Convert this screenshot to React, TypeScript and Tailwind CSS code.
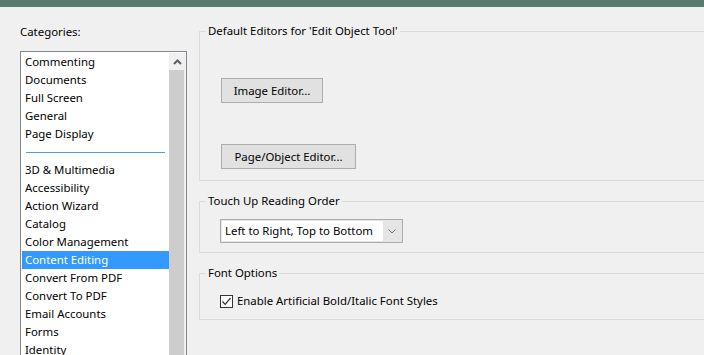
import React from "react";

const font = { fontFamily: '"Noto Sans", "Open Sans", Arial, sans-serif' };

const categoriesTop = ["Commenting", "Documents", "Full Screen", "General", "Page Display"];
const categoriesBottom = [
  "3D & Multimedia",
  "Accessibility",
  "Action Wizard",
  "Catalog",
  "Color Management",
  "Content Editing",
  "Convert From PDF",
  "Convert To PDF",
  "Email Accounts",
  "Forms",
  "Identity",
];

const Row: React.FC<{ label: string; selected?: boolean }> = ({ label, selected }) => (
  <div
    className={`h-[18px] pl-[3px] leading-[18px] whitespace-nowrap ${
      selected ? "bg-[#3399ff] text-white" : "text-black"
    }`}
  >
    {label}
  </div>
);

const GroupBox: React.FC<{ title: string; className?: string; children: React.ReactNode }> = ({
  title,
  className,
  children,
}) => (
  <fieldset className={`w-[540px] border border-[#dcdcdc] ${className ?? ""}`}>
    <legend className="ml-[6px] px-[2px] leading-[16px] text-black">{title}</legend>
    {children}
  </fieldset>
);

const WinButton: React.FC<{ label: string; width: string }> = ({ label, width }) => (
  <button
    className={`${width} h-[25px] border border-[#adadad] bg-[#e1e1e1] text-center text-black leading-[22px]`}
  >
    {label}
  </button>
);

export default function App() {
  return (
    <div
      className="w-[704px] h-[355px] overflow-hidden bg-[#f0f0f0] text-[11.4px] text-black"
      style={font}
    >
      <div className="h-[7px] bg-[#587b6f]" />
      <div className="flex">
        {/* Categories list */}
        <div className="w-[187px] shrink-0 pl-[20px]">
          <div className="mt-[17px] leading-[16px]">Categories:</div>
          <div className="mt-[11px] flex h-[320px] w-[167px] border border-[#828790] bg-white pt-[1px] pl-[1px]">
            <div className="w-[147px] shrink-0">
              {categoriesTop.map((c) => (
                <Row key={c} label={c} />
              ))}
              <div className="flex h-[18px] items-center pl-[4px] pr-[4px]">
                <div className="h-px w-full bg-[#5b9bd5]" />
              </div>
              {categoriesBottom.map((c) => (
                <Row key={c} label={c} selected={c === "Content Editing"} />
              ))}
            </div>
            {/* scrollbar */}
            <div className="flex w-[17px] flex-col bg-[#f0f0f0]">
              <div className="flex h-[17px] items-center justify-center">
                <svg width="9" height="6" viewBox="0 0 9 6">
                  <path d="M1 5 L4.5 1.5 L8 5" fill="none" stroke="#606060" strokeWidth="2" />
                </svg>
              </div>
              <div className="w-[15px] flex-1 bg-[#cdcdcd]" />
            </div>
          </div>
        </div>

        {/* Option groups */}
        <div className="ml-[12px] flex-1">
          <GroupBox title="Default Editors for 'Edit Object Tool'" className="mt-[16px] pb-[11px]">
            <div className="pl-[21px]">
              <div className="mt-[39px]">
                <WinButton label="Image Editor..." width="w-[102px]" />
              </div>
              <div className="mt-[41px]">
                <WinButton label="Page/Object Editor..." width="w-[135px]" />
              </div>
            </div>
          </GroupBox>

          <GroupBox title="Touch Up Reading Order" className="mt-[12px] pb-[9px]">
            <div className="pl-[20px]">
              <div className="mt-[10px] flex h-[24px] w-[183px] border border-[#acacac] bg-[#e5e5e5] p-[1px]">
                <div className="w-[161px] bg-white pl-[3px] leading-[20px] whitespace-nowrap">
                  Left to Right, Top to Bottom
                </div>
                <div className="flex flex-1 items-center justify-center">
                  <svg width="8" height="5" viewBox="0 0 8 5">
                    <path d="M0.5 0.5 L4 4 L7.5 0.5" fill="none" stroke="#707070" strokeWidth="1" />
                  </svg>
                </div>
              </div>
            </div>
          </GroupBox>

          <GroupBox title="Font Options" className="mt-[12px] pb-[10px]">
            <div className="pl-[20px]">
              <label className="mt-[12px] flex h-[16px] items-center gap-[4px]">
                <span className="flex h-[13px] w-[13px] items-center justify-center border border-[#333333] bg-white">
                  <svg width="11" height="11" viewBox="0 0 11 11">
                    <path d="M1.5 5.5 L4.2 8.3 L9.5 2" fill="none" stroke="#333333" strokeWidth="1.2" />
                  </svg>
                </span>
                <span className="whitespace-nowrap leading-[16px]">Enable Artificial Bold/Italic Font Styles</span>
              </label>
            </div>
          </GroupBox>
        </div>
      </div>
    </div>
  );
}
